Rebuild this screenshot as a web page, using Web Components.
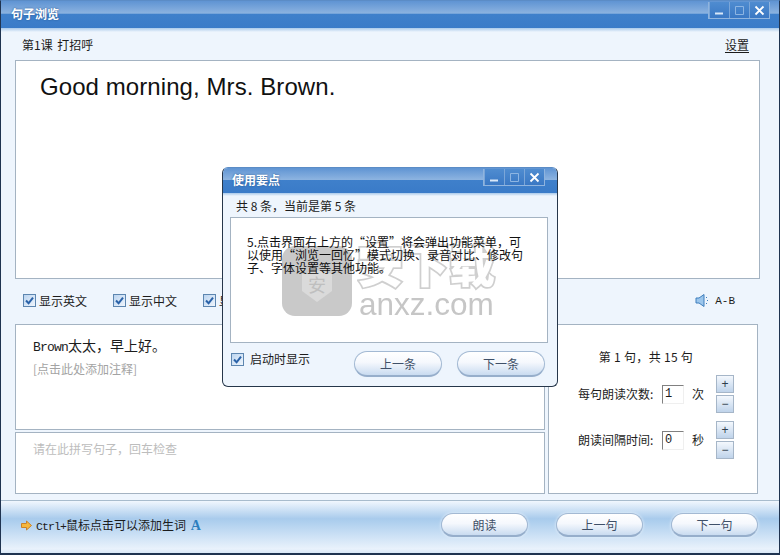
<!DOCTYPE html>
<html lang="zh-CN">
<head>
<meta charset="utf-8">
<title>句子浏览</title>
<style>
  html, body { margin: 0; height: 100%; overflow: hidden; }
  body { font: 12px/16px "Noto Sans CJK SC", "Liberation Sans", sans-serif; color: #1c1c1c; background: #eef5fd; }
</style>
</head>
<body>

<app-window></app-window>

<script>
class WinControls extends HTMLElement {
  constructor() {
    super();
    const template = document.createElement("template");
    template.innerHTML = /*html*/ `
      <style>
        :host { display: flex; height: 16px; border: 1px solid #8fb4de; border-top: 0; background: linear-gradient(#4f8cd0, #3a78c4); }
        span { width: 19px; display: flex; align-items: center; justify-content: center; border-left: 1px solid #7ba6d8; }
        span:first-child { border-left: 0; width: 18px; }
        svg { width: 11px; height: 11px; }
      </style>
      <span><svg viewBox="0 0 11 11"><path d="M1 8.500h8" stroke="#d9e8f8" stroke-width="2"/></svg></span>
      <span><svg viewBox="0 0 11 11"><path d="M1.500 1.500h8v8h-8z" fill="none" stroke="#8db5e2"/></svg></span>
      <span><svg viewBox="0 0 11 11"><path d="M1.500 1.500l8 8M9.500 1.500l-8 8" stroke="#fff" stroke-width="1.800"/></svg></span>
    `;
    this.attachShadow({ mode: "open" }).append(template.content.cloneNode(true));
  }
}
customElements.define("win-controls", WinControls);

class TitleBar extends HTMLElement {
  constructor() {
    super();
    const template = document.createElement("template");
    template.innerHTML = /*html*/ `
      <style>
        :host { display: flex; justify-content: space-between; align-items: flex-start; box-sizing: border-box; height: var(--bar-height, 27px); padding: 0 var(--bar-right, 9px) 0 var(--bar-left, 10px); background: linear-gradient(#5f94d3 0, #8cb3e0 46%, #3f80cb 47%, #3a7bc8 100%); }
        .label { color: #fff; font-weight: bold; font-size: 12px; line-height: calc(var(--bar-height, 27px) - 2px); text-shadow: 0 0 2px #25568f; }
        win-controls { margin-top: 1px; }
      </style>
      <span class="label"><slot></slot></span>
      <win-controls></win-controls>
    `;
    this.attachShadow({ mode: "open" }).append(template.content.cloneNode(true));
  }
}
customElements.define("title-bar", TitleBar);

class BoxPanel extends HTMLElement {
  constructor() {
    super();
    const template = document.createElement("template");
    template.innerHTML = /*html*/ `
      <style>
        :host { display: block; box-sizing: border-box; border: 1px solid #a4b3c2; background: #fff; }
      </style>
      <slot></slot>
    `;
    this.attachShadow({ mode: "open" }).append(template.content.cloneNode(true));
  }
}
customElements.define("box-panel", BoxPanel);

class CheckOption extends HTMLElement {
  constructor() {
    super();
    const template = document.createElement("template");
    template.innerHTML = /*html*/ `
      <style>
        :host { display: inline-flex; align-items: center; gap: var(--check-gap, 3px); white-space: nowrap; }
        svg { width: 13px; height: 13px; flex: none; }
      </style>
      <svg viewBox="0 0 13 13">
        <defs><linearGradient id="g" x1="0" y1="0" x2="1" y2="1"><stop offset="0" stop-color="#b9d3ef"/><stop offset="1" stop-color="#f2f7fd"/></linearGradient></defs>
        <rect x=".5" y=".5" width="12" height="12" fill="url(#g)" stroke="#5d86b0"/>
        <path d="M3 6.500l2.600 2.800L10 3.600" fill="none" stroke="#2a62a8" stroke-width="2"/>
      </svg>
      <slot></slot>
    `;
    this.attachShadow({ mode: "open" }).append(template.content.cloneNode(true));
  }
}
customElements.define("check-option", CheckOption);

class PillButton extends HTMLElement {
  constructor() {
    super();
    const template = document.createElement("template");
    template.innerHTML = /*html*/ `
      <style>
        :host { display: flex; align-items: center; justify-content: center; box-sizing: border-box; width: 87px; height: 24px; border-radius: 12px; border: 1px solid #a3b9d3; border-bottom: 2px solid #96aecb; color: #3f5068; font-size: 12px; background: linear-gradient(#ffffff 0, #f5f8fd 45%, #c9dbf0 100%); box-shadow: 0 0 3px #e9f2fb; }
      </style>
      <slot></slot>
    `;
    this.attachShadow({ mode: "open" }).append(template.content.cloneNode(true));
  }
}
customElements.define("pill-button", PillButton);

class StepButtons extends HTMLElement {
  constructor() {
    super();
    const template = document.createElement("template");
    template.innerHTML = /*html*/ `
      <style>
        :host { display: flex; flex-direction: column; gap: 2px; }
        span { display: flex; align-items: center; justify-content: center; box-sizing: border-box; width: 18px; height: 18px; border: 1px solid #a6b6c8; background: linear-gradient(#f4f8fd, #bfd3ea); font: 12px/1 "Liberation Sans", sans-serif; color: #2f3d4d; }
      </style>
      <span>+</span>
      <span>−</span>
    `;
    this.attachShadow({ mode: "open" }).append(template.content.cloneNode(true));
  }
}
customElements.define("step-buttons", StepButtons);

class RepeatRow extends HTMLElement {
  constructor() {
    super();
    const template = document.createElement("template");
    template.innerHTML = /*html*/ `
      <style>
        :host { display: flex; align-items: center; }
        .label { width: 84px; white-space: nowrap; }
        .num { box-sizing: border-box; width: 22px; height: 19px; border: 1px solid; border-color: #808080 #efefef #efefef #808080; background: #fff; padding-left: 2px; font: 12px/17px "Liberation Mono", monospace; }
        .unit { width: 32px; padding-left: 8px; box-sizing: border-box; }
      </style>
      <span class="label"><slot name="label"></slot></span>
      <span class="num"><slot name="value"></slot></span>
      <span class="unit"><slot name="unit"></slot></span>
      <step-buttons></step-buttons>
    `;
    this.attachShadow({ mode: "open" }).append(template.content.cloneNode(true));
  }
}
customElements.define("repeat-row", RepeatRow);

class HintDialog extends HTMLElement {
  constructor() {
    super();
    const template = document.createElement("template");
    template.innerHTML = /*html*/ `
      <style>
        :host { position: absolute; left: 221px; top: 166px; width: 336px; height: 220px; box-sizing: border-box; display: flex; flex-direction: column; border: 1px solid #26364a; border-top-color: #5b8cc6; border-radius: 6px; background: #eef5fd; overflow: hidden; --bar-height: 25px; --bar-right: 12px; --bar-left: 9px; --check-gap: 6px; }
        title-bar { flex: none; }
        .fade { height: 3px; background: linear-gradient(#a9c9ea, #eef5fd); }
        .count { padding: 2px 0 0 13px; height: 21px; box-sizing: border-box; }
        box-panel { width: 318px; height: 126px; margin-left: 7px; padding: 17px 0 0 16px; }
        .tip { line-height: 13px; white-space: nowrap; color: #111; }
        .foot { display: flex; align-items: flex-start; gap: 15px; margin: 8px 0 0 8px; }
        check-option { flex: none; width: 108px; }
        pill-button { flex: none; width: 88px; height: 26px; border-radius: 13px; }
      </style>
      <title-bar>使用要点</title-bar>
      <div class="fade"></div>
      <div class="count">共 8 条，当前是第 5 条</div>
      <box-panel>
        <div class="tip">5.点击界面右上方的“设置”将会弹出功能菜单，可<br>以使用“浏览一回忆”模式切换、录音对比、修改句<br>子、字体设置等其他功能。</div>
      </box-panel>
      <div class="foot">
        <check-option>启动时显示</check-option>
        <pill-button>上一条</pill-button>
        <pill-button>下一条</pill-button>
      </div>
    `;
    this.attachShadow({ mode: "open" }).append(template.content.cloneNode(true));
  }
}
customElements.define("hint-dialog", HintDialog);

class SiteMark extends HTMLElement {
  constructor() {
    super();
    const template = document.createElement("template");
    template.innerHTML = /*html*/ `
      <style>
        :host { position: absolute; left: 281px; top: 239px; width: 216px; height: 80px; mix-blend-mode: multiply; pointer-events: none; }
        .badge { position: absolute; left: 0; top: 6px; width: 70px; height: 70px; border-radius: 13px; background: #c9c9c9; }
        svg { position: absolute; left: 20px; top: 24px; width: 30px; height: 32px; }
        .shield { position: absolute; left: 20px; top: 26px; width: 30px; text-align: center; font-size: 18px; line-height: 24px; color: #bfbfbf; }
        .cn { position: absolute; left: 75px; top: -9px; font-size: 46px; line-height: 62px; font-weight: 900; color: #fff; -webkit-text-stroke: 3.500px #cfcfcf; paint-order: stroke fill; white-space: nowrap; }
        .en { position: absolute; left: 77px; top: 48px; font: 31.500px/32px "Liberation Sans", sans-serif; color: #c6c6c6; white-space: nowrap; }
      </style>
      <div class="badge">
        <svg viewBox="0 0 30 32"><path d="M0 4L15 0l15 4v17L15 32 0 21z" fill="#dadada"/></svg>
        <div class="shield">安</div>
      </div>
      <div class="cn">安下载</div>
      <div class="en">anxz.com</div>
    `;
    this.attachShadow({ mode: "open" }).append(template.content.cloneNode(true));
  }
}
customElements.define("site-mark", SiteMark);

class AppWindow extends HTMLElement {
  constructor() {
    super();
    const template = document.createElement("template");
    template.innerHTML = /*html*/ `
      <style>
        :host { display: flex; flex-direction: column; position: relative; box-sizing: border-box; width: 780px; height: 555px; border: 1px solid #1f3350; border-top-color: #5b8cc6; border-bottom-width: 2px; background: #eef5fd; overflow: hidden; }
        .fade { height: 4px; background: linear-gradient(#a9c9ea, #eef5fd); flex: none; }
        .head { display: flex; justify-content: space-between; align-items: center; height: 28px; flex: none; padding: 0 30px 2px 21px; box-sizing: border-box; word-spacing: 2px; }
        .head u { text-underline-offset: 2px; }
        .sentence { width: 745px; height: 219px; margin-left: 14px; flex: none; padding: 8px 0 0 24px; font: 24px/36px "Liberation Sans", sans-serif; letter-spacing: .08px; color: #111; }
        .options { display: flex; align-items: center; height: 45px; flex: none; padding: 0 44px 2px 22px; box-sizing: border-box; }
        .options check-option { width: 90px; }
        .ab { margin-left: auto; display: flex; align-items: center; gap: 5px; font: 11px "Liberation Mono", monospace; }
        .ab svg { width: 15px; height: 15px; }
        .lower { display: grid; grid-template-columns: 530px 210px; grid-template-rows: 106px 62px; gap: 2px 3px; margin-left: 14px; flex: none; }
        .notes { padding: 11px 0 0 17px; }
        .zh { font-size: 14px; line-height: 18px; }
        .zh span { font: 13px "Liberation Mono", monospace; letter-spacing: -.8px; }
        .add { color: #a3a3a3; line-height: 16px; margin-top: 6px; }
        .spell { padding: 8px 0 0 17px; color: #bdbdbd; }
        .side { grid-column: 2; grid-row: 1 / 3; padding: 23px 0 0 29px; display: flex; flex-direction: column; }
        .pos { text-align: center; margin-left: -43px; line-height: 18px; margin-bottom: 9px; letter-spacing: .3px; }
        repeat-row { margin-bottom: 8px; }
        .footer { margin-top: 6px; flex: 1; display: flex; align-items: center; padding: 0 21px 4px 20px; border-top: 1px solid #a8bccd; background: linear-gradient(#f1f7fe 0, #a9cbec 34%, #aecfee 40%, #e9f2fc 92%, #d9e8f7 100%); }
        .hint { display: flex; align-items: center; gap: 4px; flex: 1; }
        .hint svg { width: 11px; height: 11px; }
        .hint span { font: 11.500px "Liberation Mono", monospace; letter-spacing: -.9px; }
        .hint b { font: bold 14px "Liberation Serif", serif; color: #2c7fbe; margin-left: 2px; }
        .footer pill-button { margin-left: 28px; }
        .footer pill-button:first-of-type { margin-left: 0; }
      </style>
      <title-bar>句子浏览</title-bar>
      <div class="fade"></div>
      <div class="head"><span>第1课 打招呼</span><u>设置</u></div>
      <box-panel class="sentence">Good morning, Mrs. Brown.</box-panel>
      <div class="options">
        <check-option>显示英文</check-option>
        <check-option>显示中文</check-option>
        <check-option>显示音标</check-option>
        <div class="ab">
          <svg viewBox="0 0 15 15">
            <path d="M1 5h3L9 1.500v12L4 10H1z" fill="#9cc6ec" stroke="#3f7fbd"/>
            <path d="M11.500 4v1M12.500 7v1M11.500 10v1" stroke="#3f7fbd"/>
          </svg>
          A-B
        </div>
      </div>
      <div class="lower">
        <box-panel class="notes">
          <div class="zh"><span>Brown</span>太太，早上好。</div>
          <div class="add">[点击此处添加注释]</div>
        </box-panel>
        <box-panel class="side">
          <div class="pos">第 1 句，共 15 句</div>
          <repeat-row>
            <span slot="label">每句朗读次数:</span><span slot="value">1</span><span slot="unit">次</span>
          </repeat-row>
          <repeat-row>
            <span slot="label">朗读间隔时间:</span><span slot="value">0</span><span slot="unit">秒</span>
          </repeat-row>
        </box-panel>
        <box-panel class="spell">请在此拼写句子，回车检查</box-panel>
      </div>
      <div class="footer">
        <div class="hint">
          <svg viewBox="0 0 11 11"><path d="M.5 3.500h5V1L10.500 5.500 5.500 10V7.500h-5z" fill="#f6b73c" stroke="#c9822a"/></svg>
          <div><span>Ctrl+</span>鼠标点击可以添加生词 <b>A</b></div>
        </div>
        <pill-button>朗读</pill-button>
        <pill-button>上一句</pill-button>
        <pill-button>下一句</pill-button>
      </div>
      <hint-dialog></hint-dialog>
      <site-mark></site-mark>
    `;
    this.attachShadow({ mode: "open" }).append(template.content.cloneNode(true));
  }
}
customElements.define("app-window", AppWindow);
</script>
</body>
</html>
